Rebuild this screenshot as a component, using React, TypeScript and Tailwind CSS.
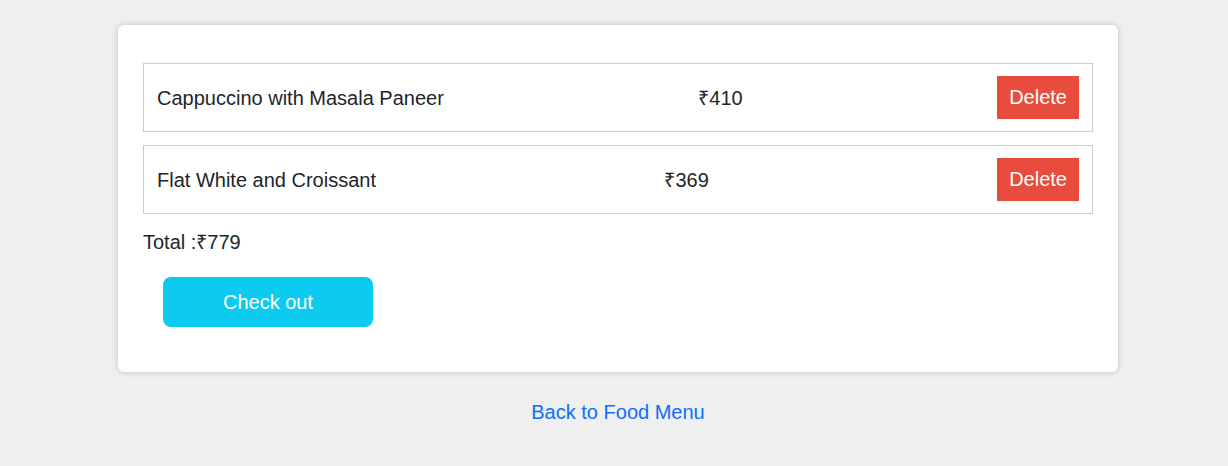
const items = [
  { name: "Cappuccino with Masala Paneer", price: 410 },
  { name: "Flat White and Croissant", price: 369 },
];

export default function App() {
  const total = items.reduce((s, i) => s + i.price, 0);

  return (
    <div className="min-h-[466px] bg-[#efefef] pt-[25px] pl-[8px] font-['Liberation_Sans',Arial,sans-serif] text-[20px] text-[#212529]">
      <div className="mx-auto w-[1000px] rounded-[6px] bg-white px-[25px] pt-[38px] pb-[45px] shadow-[0_0_6px_rgba(0,0,0,0.2)]">
        {items.map((item) => (
          <div
            key={item.name}
            className="mb-[13px] flex items-center justify-between border border-[#cccccc] px-[13px] py-[12px]"
          >
            <span>{item.name}</span>
            <span>₹{item.price}</span>
            <button className="bg-[#e74c3c] px-[12px] py-[10px] leading-[23px] text-white">
              Delete
            </button>
          </div>
        ))}
        <div className="mt-[17px] leading-[23px]">Total :₹{total}</div>
        <button className="mt-[23px] ml-[20px] h-[50px] w-[210px] rounded-[8px] bg-[#0dcaf0] text-white">
          Check out
        </button>
      </div>
      <div className="mt-[25px] text-center">
        <a href="#" className="text-[#0d6efd]">
          Back to Food Menu
        </a>
      </div>
    </div>
  );
}
